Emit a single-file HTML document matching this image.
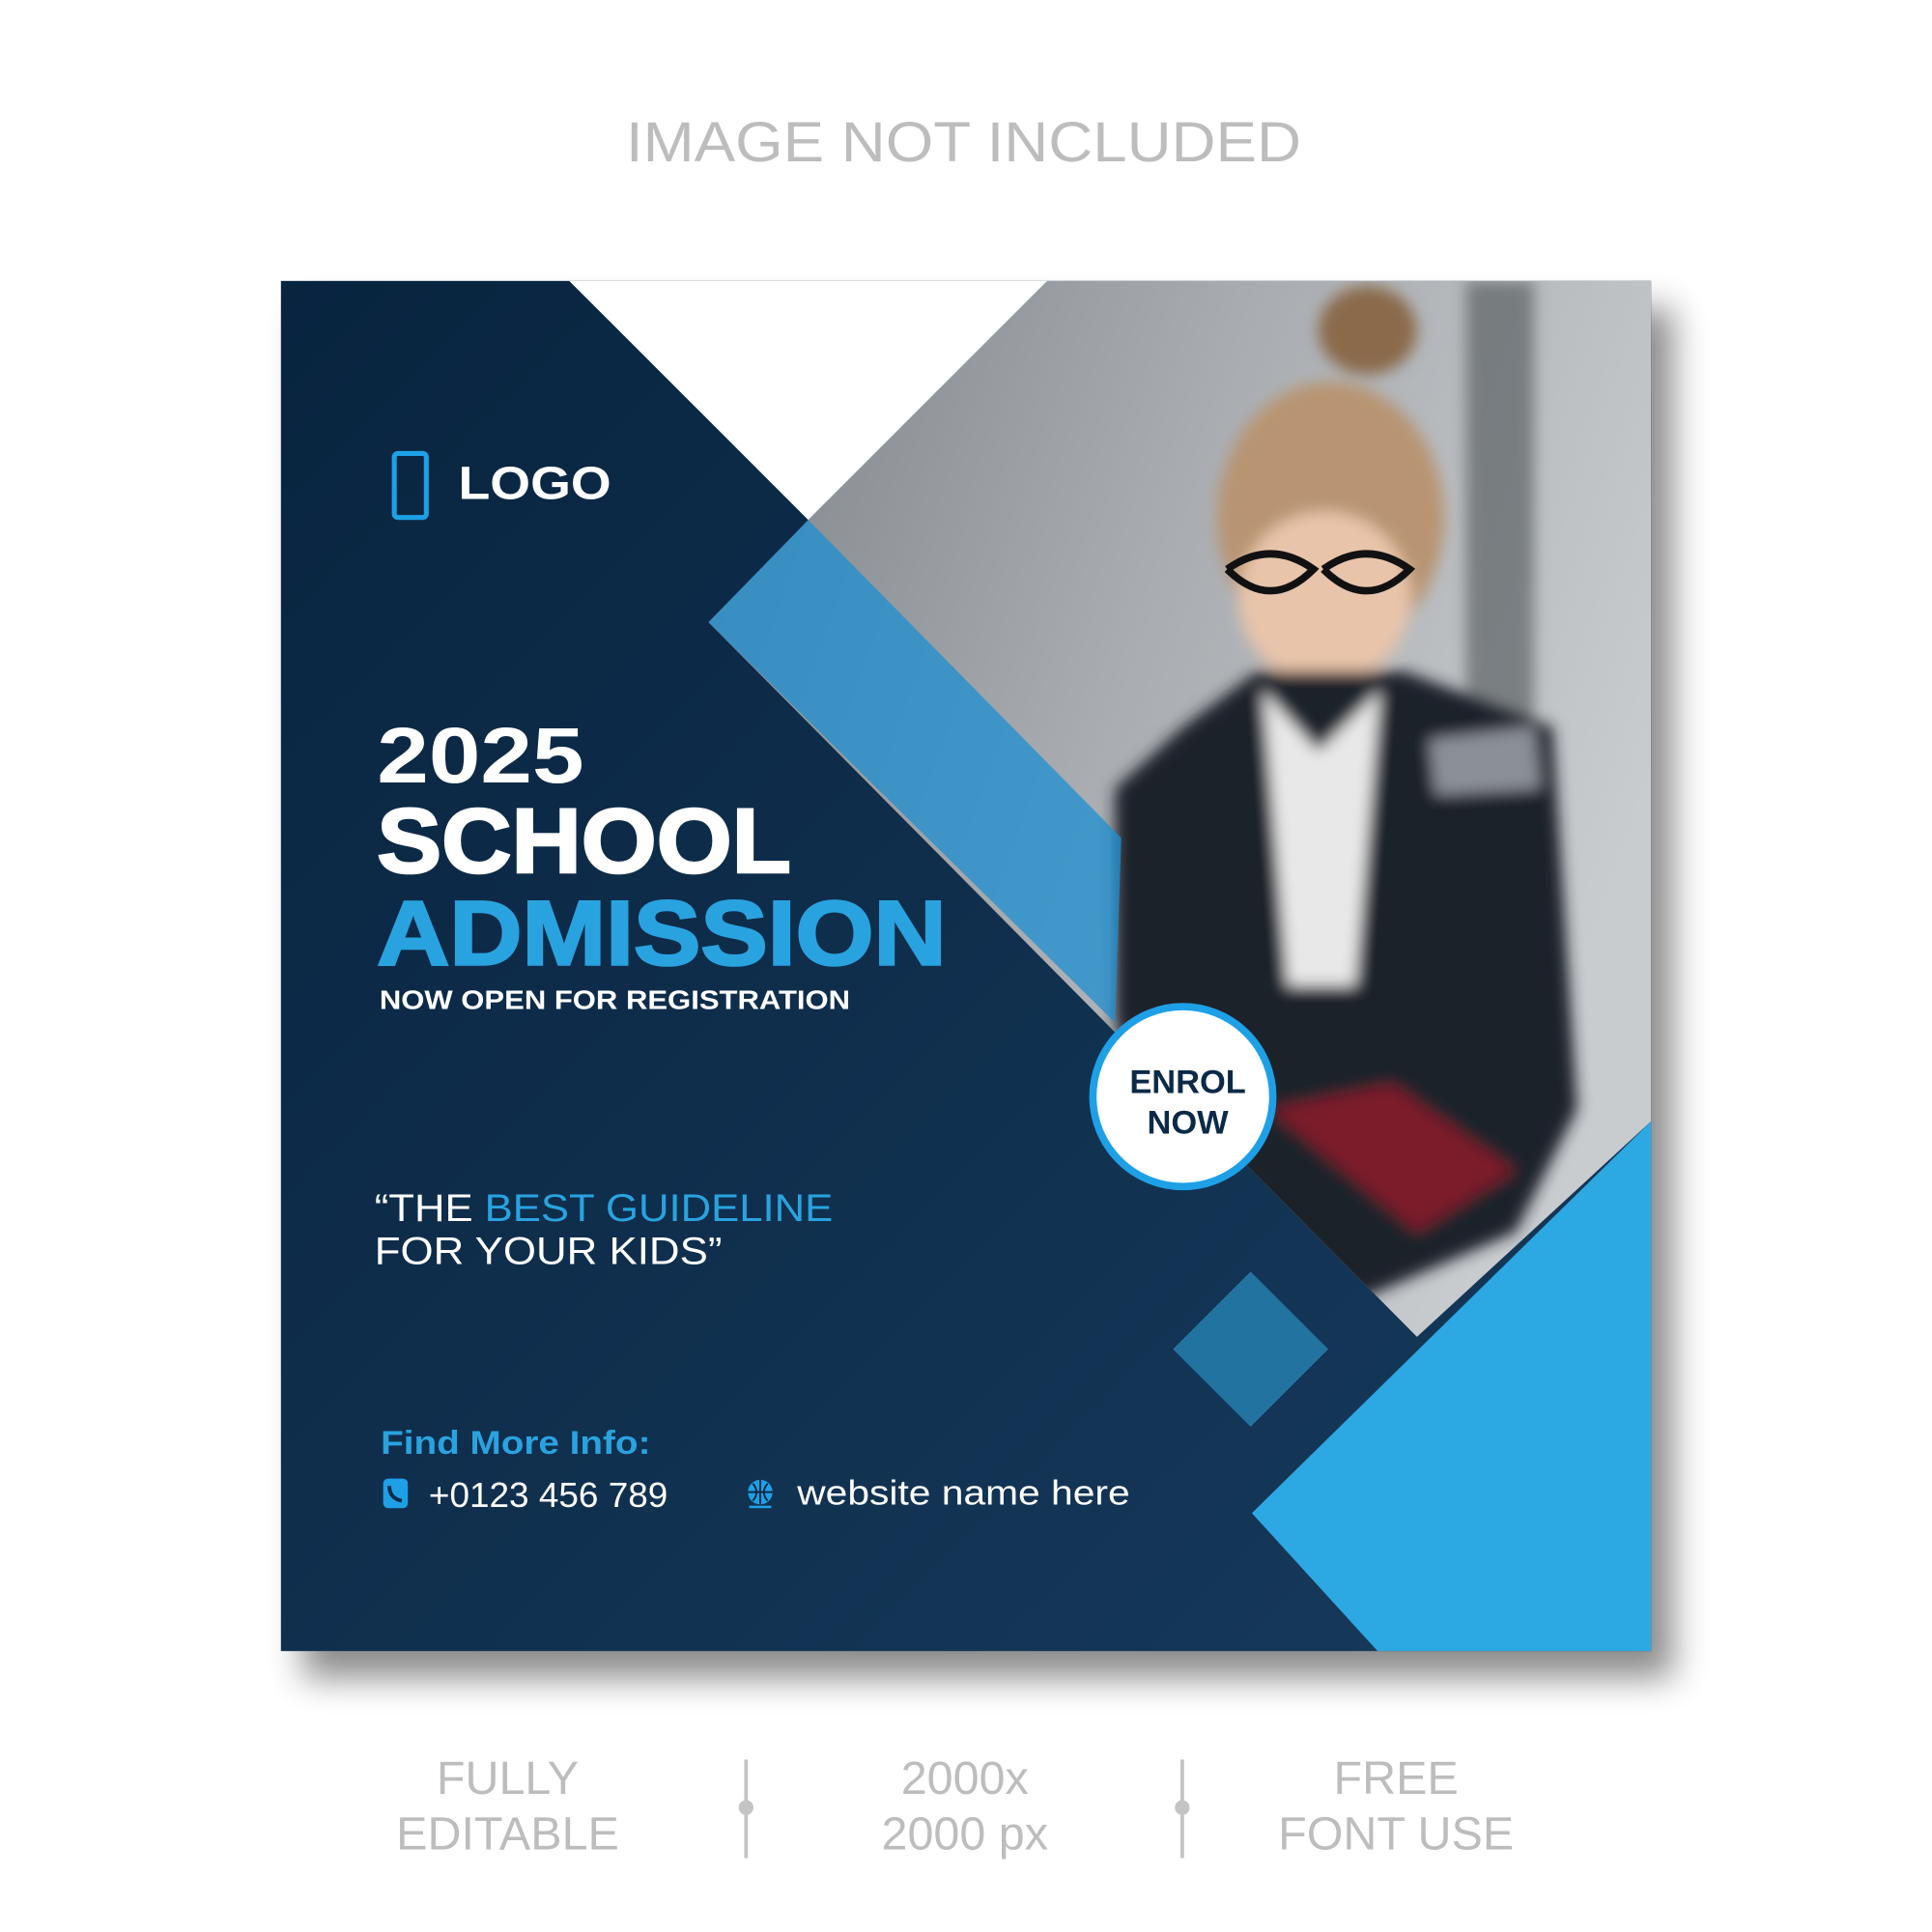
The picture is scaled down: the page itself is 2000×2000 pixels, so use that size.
<!DOCTYPE html>
<html><head><meta charset="utf-8"><style>html,body{margin:0;padding:0;background:#fff}svg{display:block}</style></head>
<body>
<svg width="2000" height="2000" viewBox="0 0 1568 1568" xmlns="http://www.w3.org/2000/svg" font-family="Liberation Sans, sans-serif">
<defs>
<linearGradient id="nv" x1="0" y1="0" x2="1" y2="1"><stop offset="0" stop-color="#08243f"/><stop offset="1" stop-color="#173a5c"/></linearGradient>
<linearGradient id="ph" x1="0" y1="0" x2="1" y2="0.4"><stop offset="0" stop-color="#7d8288"/><stop offset="0.5" stop-color="#a9adb1"/><stop offset="1" stop-color="#c9cccf"/></linearGradient>
<filter id="sh" x="-10%" y="-10%" width="130%" height="130%"><feGaussianBlur stdDeviation="14"/></filter>
<filter id="bl"><feGaussianBlur stdDeviation="6"/></filter>
<clipPath id="pc"><polygon points="850,228 1340,228 1340,910 1150,1085 575,505 656,422"/></clipPath>
</defs>
<rect width="1568" height="1568" fill="#fff"/>
<text x="782" y="131" text-anchor="middle" font-size="46" fill="#bdbdbd" textLength="548" lengthAdjust="spacingAndGlyphs">IMAGE NOT INCLUDED</text>
<rect x="246" y="250" width="1112" height="1112" fill="#000" opacity="0.45" filter="url(#sh)"/>
<rect x="228" y="228" width="1112" height="1112" fill="url(#nv)"/>
<polygon points="462,228 850,228 656,422" fill="#fff"/>
<g clip-path="url(#pc)">
<rect x="560" y="228" width="800" height="900" fill="url(#ph)"/>
<g filter="url(#bl)">
<rect x="1190" y="228" width="55" height="700" fill="#4d5156" opacity="0.6"/>
<ellipse cx="1110" cy="268" rx="40" ry="36" fill="#8a6a4c"/>
<ellipse cx="1080" cy="420" rx="92" ry="110" fill="#b89472"/>
<ellipse cx="1075" cy="485" rx="70" ry="70" fill="#e8c4aa"/>
<path d="M960 590 L1020 545 L1140 545 L1260 590 L1280 900 L1230 1000 L1000 1100 L905 830 L905 640 Z" fill="#1e222a"/>
<path d="M1025 560 L1070 610 L1120 560 L1100 800 L1045 800 Z" fill="#e8e8e8"/>
<path d="M1160 600 L1245 590 L1250 640 L1165 645 Z" fill="#8b9097"/>
<polygon points="1030,900 1130,880 1230,950 1150,1000" fill="#7b1d2a"/>
</g>
<path d="M996 462 q35 -25 70 0 q-35 35 -70 0 M1074 462 q35 -25 70 0 q-35 35 -70 0" stroke="#111" stroke-width="6" fill="none"/>
</g>
<polygon points="575,505 656,422 910,680 905,830" fill="#1e8fd0" opacity="0.75"/>
<polygon points="1340,910 1340,1340 1118,1340 1016,1228" fill="#2ca8e2"/>
<polygon points="1015,1032 1078,1095 1015,1158 952,1095" fill="#2373a0"/>
<circle cx="960" cy="890" r="73" fill="#fff" stroke="#1ea0e6" stroke-width="6"/>
<text x="964" y="887" text-anchor="middle" font-size="27" font-weight="bold" fill="#0b2a48">ENROL</text>
<text x="964" y="920" text-anchor="middle" font-size="27" font-weight="bold" fill="#0b2a48">NOW</text>
<rect x="320" y="368" width="26" height="52" rx="3" fill="none" stroke="#1ea0e6" stroke-width="4"/>
<text x="372" y="405" font-size="38" font-weight="bold" fill="#fff" textLength="124" lengthAdjust="spacingAndGlyphs">LOGO</text>
<text x="306" y="635" font-size="64" font-weight="bold" fill="#fff" textLength="168" lengthAdjust="spacingAndGlyphs">2025</text>
<text x="306" y="708" font-size="74" font-weight="900" fill="#fff" stroke="#fff" stroke-width="2" textLength="336" lengthAdjust="spacingAndGlyphs">SCHOOL</text>
<text x="306" y="783" font-size="74" font-weight="900" fill="#29a3e0" stroke="#29a3e0" stroke-width="2" textLength="462" lengthAdjust="spacingAndGlyphs">ADMISSION</text>
<text x="308" y="819" font-size="22" font-weight="bold" fill="#fff" textLength="382" lengthAdjust="spacingAndGlyphs">NOW OPEN FOR REGISTRATION</text>
<text x="304" y="991" font-size="31" fill="#fff" textLength="372" lengthAdjust="spacingAndGlyphs">“THE <tspan fill="#29a3e0">BEST GUIDELINE</tspan></text>
<text x="304" y="1026" font-size="31" fill="#fff" textLength="282" lengthAdjust="spacingAndGlyphs">FOR YOUR KIDS”</text>
<text x="309" y="1180" font-size="27" font-weight="bold" fill="#29a3e0" textLength="219" lengthAdjust="spacingAndGlyphs">Find More Info:</text>
<rect x="311" y="1200" width="20" height="24" rx="4" fill="#1ea0e6"/>
<path d="M316 1206 q0 10 10 12" stroke="#0b2a48" stroke-width="3" fill="none"/>
<text x="348" y="1223" font-size="28" fill="#fff" textLength="194" lengthAdjust="spacingAndGlyphs">+0123 456 789</text>
<circle cx="617" cy="1211" r="10" fill="#1ea0e6"/>
<path d="M607 1211 h20 M617 1201 v20 M611 1204 q6 7 0 14 M623 1204 q-6 7 0 14" stroke="#0b2a48" stroke-width="1.5" fill="none"/>
<rect x="608" y="1222" width="18" height="2" fill="#1ea0e6"/>
<text x="647" y="1221" font-size="28" fill="#fff" textLength="270" lengthAdjust="spacingAndGlyphs">website name here</text>
<g font-size="38" fill="#bdbdbd" text-anchor="middle">
<text x="412" y="1456">FULLY</text><text x="412" y="1501">EDITABLE</text>
<text x="783" y="1456">2000x</text><text x="783" y="1501">2000 px</text>
<text x="1133" y="1456">FREE</text><text x="1133" y="1501">FONT USE</text>
</g>
<rect x="604" y="1428" width="3" height="80" fill="#c4c4c4"/><circle cx="605.5" cy="1467" r="6" fill="#c4c4c4"/>
<rect x="958" y="1428" width="3" height="80" fill="#c4c4c4"/><circle cx="959.5" cy="1467" r="6" fill="#c4c4c4"/>
</svg>
</body></html>
